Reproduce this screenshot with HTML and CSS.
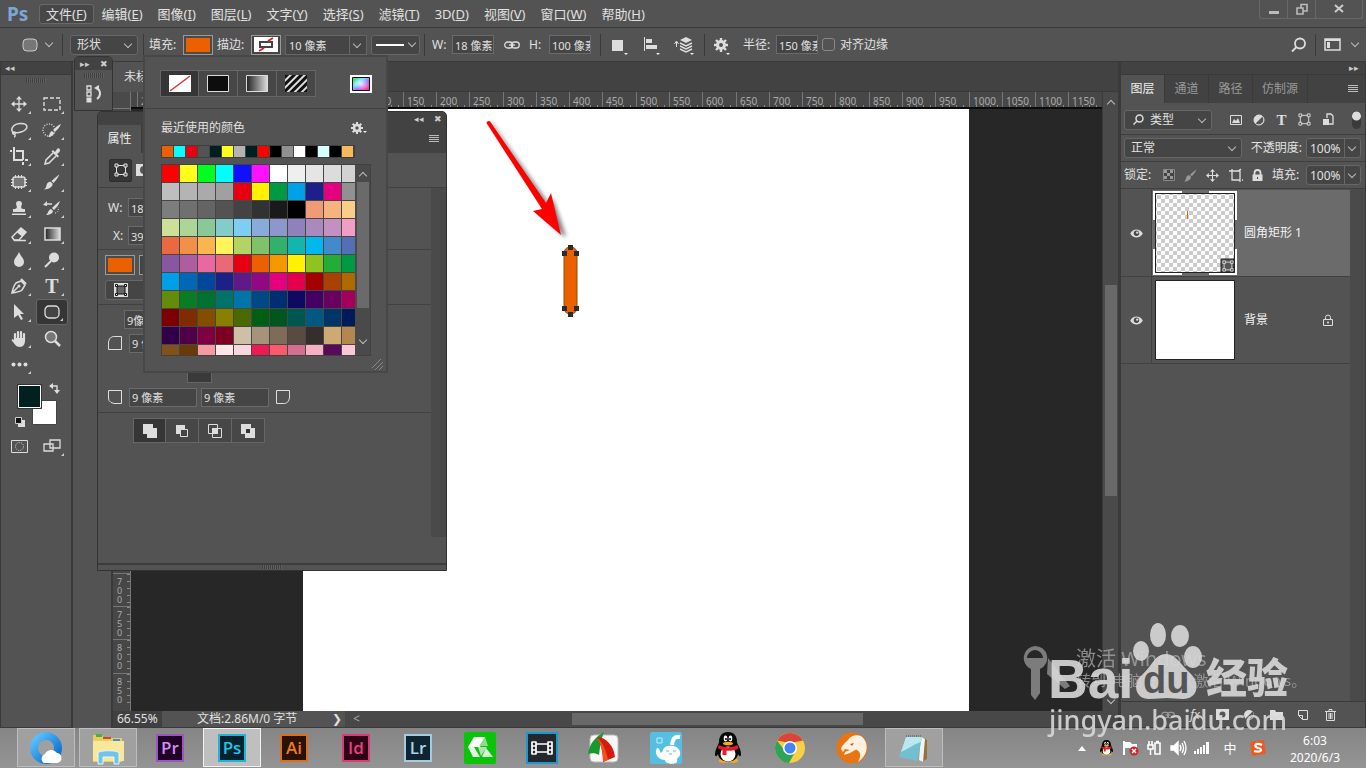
FILE: index.html
```html
<!DOCTYPE html>
<html lang="zh-CN">
<head>
<meta charset="utf-8">
<title>Photoshop</title>
<link rel="stylesheet" href="styles.css">
</head>
<body>
<svg class="defs" aria-hidden="true">
  <defs>
    <linearGradient id="g-grey"><stop offset="0" stop-color="#222"/><stop offset="1" stop-color="#ddd"/></linearGradient>
    <linearGradient id="g-blue" x1="0" y1="0" x2="1" y2="1"><stop offset="0" stop-color="#5fc4ff"/><stop offset="1" stop-color="#0667c8"/></linearGradient>
    <linearGradient id="g-rain" x1="0" y1="0" x2="1" y2="1"><stop offset="0" stop-color="#19e83a"/><stop offset=".35" stop-color="#6fe6ff"/><stop offset=".6" stop-color="#a86bff"/><stop offset=".8" stop-color="#ff4fb0"/><stop offset="1" stop-color="#ff2020"/></linearGradient>
    <radialGradient id="g-fade"><stop offset="0" stop-color="#fff" stop-opacity=".8"/><stop offset="1" stop-color="#fff" stop-opacity="0"/></radialGradient>
    <pattern id="p-check" width="8" height="8" patternUnits="userSpaceOnUse"><rect width="8" height="8" fill="#fff"/><path d="M0 0h4v4H0zM4 4h4v4H4z" fill="#ccc"/></pattern>
    <pattern id="p-stripe" width="5" height="5" patternUnits="userSpaceOnUse" patternTransform="rotate(45)"><rect width="5" height="5" fill="#ddd"/><rect width="3" height="5" fill="#111"/></pattern>
  </defs>
  <symbol id="path-box" viewBox="0 0 14 14"><path d="M2.500 2.500h9v9h-9z" fill="none" stroke="currentColor"/><path d="M1 1h3v3H1zM10 1h3v3h-3zM1 10h3v3H1zM10 10h3v3h-3z" fill="#535353" stroke="currentColor"/></symbol>
  <symbol id="gear" viewBox="0 0 14 14"><circle cx="7" cy="7" r="3.500" fill="none" stroke="currentColor" stroke-width="3"/><path d="M7 0v3M7 11v3M0 7h3M11 7h3M2 2l2 2M10 10l2 2M12 2l-2 2M4 10l-2 2" stroke="currentColor" stroke-width="2.400"/></symbol>
  <symbol id="move" viewBox="0 0 16 16"><path d="M8 2v12M2 8h12" stroke="currentColor" stroke-width="1.300"/><path d="M8 0l3 3.500H5zM8 16l3-3.500H5zM0 8l3.500-3v6zM16 8l-3.500-3v6z" fill="currentColor"/></symbol>
  <symbol id="brush" viewBox="0 0 16 16"><path d="M15.500.500c-1.500 3-4 6.500-6 8.500L7.500 7C10 4.500 13 2 15.500.500zM6.700 7.800l2 2C8.500 13 5 15.500 0 15.500c2.500-1.500 2-3 2.700-5C3.500 8.500 5 7.500 6.700 7.800z" fill="currentColor"/></symbol>
  <symbol id="eye" viewBox="0 0 14 10"><path d="M0 5c3-6 11-6 14 0-3 6-11 6-14 0z" fill="#ddd"/><circle cx="7" cy="4.800" r="3" fill="#4a4a4a"/><circle cx="7.800" cy="4" r="1.300" fill="#ddd"/></symbol>
  <symbol id="crop" viewBox="0 0 18 18"><path d="M4 0v13h9M0 4h2M6 4h7v9M13 15v3M15 13h3" fill="none" stroke="currentColor" stroke-width="2"/></symbol>
  <symbol id="link" viewBox="0 0 16 8"><rect x=".700" y="1" width="8" height="6" rx="3" fill="none" stroke="currentColor" stroke-width="1.300"/><rect x="7.300" y="1" width="8" height="6" rx="3" fill="none" stroke="currentColor" stroke-width="1.300"/><path d="M5 4h6" stroke="currentColor" stroke-width="1.300"/></symbol>
  <symbol id="qq" viewBox="0 0 28 32"><path d="M5 28c2-3 16-3 19 0 1 4-8 3-9.500 2C12 31 4 32 5 28z" fill="#f7a81b"/><path d="M14 0c6 0 9 4 9 10 0 2 4 7 4 12 0 3-1.500 3-3 0-1 10-19 10-20 0-1.500 3-3 3-3 0C1 17 5 12 5 10 5 4 8 0 14 0z" fill="#080808"/><ellipse cx="14" cy="22" rx="7.500" ry="7.500" fill="#fff"/><ellipse cx="11.500" cy="6.500" rx="1.800" ry="3" fill="#fff"/><ellipse cx="16.500" cy="6.500" rx="1.800" ry="3" fill="#fff"/><circle cx="12" cy="7" r="1"/><circle cx="16" cy="7" r="1"/><ellipse cx="14" cy="11.500" rx="5" ry="1.800" fill="#f7a81b"/><path d="M4.500 13c6 3 13 3 19 0l1 3.500c-4 2-8 2.500-12 2.200V23H8.500v-5L4 16.500z" fill="#e51c23"/></symbol>
</svg>

<div class="app">
  <header class="menubar">
    <span class="logo">Ps</span>
    <nav class="menus" aria-label="主菜单">
      <button class="menu menu-on">文件(<u>F</u>)</button><button class="menu">编辑(<u>E</u>)</button><button class="menu">图像(<u>I</u>)</button><button class="menu">图层(<u>L</u>)</button><button class="menu">文字(<u>Y</u>)</button><button class="menu">选择(<u>S</u>)</button><button class="menu">滤镜(<u>T</u>)</button><button class="menu">3D(<u>D</u>)</button><button class="menu">视图(<u>V</u>)</button><button class="menu">窗口(<u>W</u>)</button><button class="menu">帮助(<u>H</u>)</button>
    </nav>
    <div class="winbtns">
      <button aria-label="最小化"><svg width="12" height="12"><path d="M1 9.500h10" stroke="#bbb" stroke-width="3"/></svg></button>
      <button aria-label="还原"><svg width="12" height="12" fill="none" stroke="#bbb" stroke-width="1.600"><path d="M1 5h6v6H1zM5 5V1.500h6V8H7"/></svg></button>
      <button aria-label="关闭"><svg width="12" height="12"><path d="M2 2l8 7M10 2l-8 7" stroke="#ccc" stroke-width="2"/></svg></button>
    </div>
  </header>

  <div class="options">
    <div class="group g-shape"><button class="shape-btn" aria-label="圆角矩形工具"><svg width="16" height="14"><rect x="1" y="1" width="14" height="12" rx="4" fill="#777" stroke="#ccc"/></svg><i class="chev"></i></button></div>
    <div class="group g-mode"><span class="sel w-mode"><select aria-label="工具模式"><option>形状</option></select></span></div>
    <div class="group g-fill">
      <span class="lab">填充:</span><button class="swatch sw-orange" aria-label="填充颜色"></button>
      <span class="lab">描边:</span><button class="swatch" aria-label="描边颜色"><svg width="24" height="15"><path fill="#fff" d="M0 0h24v15H0z"/><path d="M6 5h12v5H6z" fill="#fff" stroke="#444" stroke-width="2"/><path d="M5 14l5-3M14 4l5-3" stroke="#d22" stroke-width="2"/></svg></button>
      <span class="sel w-stroke"><input aria-label="描边宽度" value="10 像素"></span>
      <button class="line-btn" aria-label="描边类型"><i class="stroke"></i><i class="chev"></i></button>
    </div>
    <div class="group g-size">
      <label for="ow">W:</label><input class="field" id="ow" value="18 像素">
      <button class="tool-btn" aria-label="链接宽高"><svg width="16" height="8"><use href="#link"/></svg></button>
      <label for="oh">H:</label><input class="field" id="oh" value="100 像素">
    </div>
    <div class="group g-ops">
      <button class="tool-btn" aria-label="路径操作"><svg width="20" height="20"><path d="M4 5h11v11H4z" fill="#ddd"/><path d="M16 18h4l-2 2z" fill="#eee"/></svg></button>
      <button class="tool-btn" aria-label="路径对齐"><svg width="20" height="20"><path d="M3.500 2v14" stroke="#ddd"/><path d="M5 4h6v4H5zM5 10h11v4H5z" fill="#ddd"/><path d="M15 18h4l-2 2z" fill="#eee"/></svg></button>
      <button class="tool-btn" aria-label="路径排列"><svg width="20" height="20"><path d="M2.500 12V7M.500 9l2-3 2 3" stroke="#ddd" fill="none"/><path d="M12 2l6 3-6 3-6-3z" fill="#ddd"/><path d="M6 8l6 3 6-3M6 11l6 3 6-3M6 14l6 3 6-3" fill="none" stroke="#ddd" stroke-width="1.400"/><path d="M16 18h4l-2 2z" fill="#eee"/></svg></button>
    </div>
    <div class="group g-radius">
      <button class="tool-btn" aria-label="设置"><svg width="16" height="20"><use href="#gear" y="3" width="14" height="14"/><path d="M12 18h4l-2 2z" fill="#eee"/></svg></button>
      <label for="orad">半径:</label><input class="field" id="orad" value="150 像素">
      <input type="checkbox" id="align"><label for="align">对齐边缘</label>
    </div>
    <div class="right-tools">
      <button class="search" aria-label="搜索"><svg width="16" height="16" fill="none" stroke="#ddd" stroke-width="1.800"><circle cx="9" cy="6.500" r="5"/><path d="M5.500 10L1 14.500"/></svg></button>
      <button class="wspace" aria-label="工作区"><svg width="17" height="13"><path d="M1 1h15v11H1z" fill="none" stroke="#ddd" stroke-width="1.500"/><path d="M1 2h15" stroke="#ddd" stroke-width="2"/><path d="M3 4h3v6H3z" fill="#ddd"/></svg><i class="chev"></i></button>
    </div>
  </div>

  <main class="work">
    <aside class="tools" aria-label="工具">
      <div class="bar-head">◂◂</div>
      <div class="grip"></div>
      <div class="tool-grid" id="tools">
        <button aria-label="移动"><svg width="16" height="16"><use href="#move"/></svg></button>
        <button aria-label="矩形选框"><svg width="18" height="14"><path d="M1 1h16v12H1z" fill="none" stroke="#ddd" stroke-width="1.400" stroke-dasharray="4 2"/></svg></button>
        <button aria-label="套索"><svg width="18" height="16" fill="none" stroke="#ddd" stroke-width="1.500"><path d="M4 11C-1 8 3 2 10 1.500c9-.500 9 6 1 8.500-3 1-6 .500-7 0-1.500 0-2 2 0 2s2-2 0-2M4 12c2 1 1 3 0 3"/></svg></button>
        <button aria-label="快速选择"><svg width="20" height="16"><circle cx="7" cy="8" r="6" fill="none" stroke="#ddd" stroke-dasharray="1 1.500" stroke-width="1.400"/><path d="M19 2c-1 3-4 6-6 8l-2-2c3-3 5-5 8-6zM10 9l2 2c0 2-3 4-6 4 2-1 1-5 4-6z" fill="#ddd"/></svg></button>
        <button aria-label="裁剪"><svg width="18" height="18"><use href="#crop"/></svg></button>
        <button aria-label="吸管"><svg width="17" height="17"><path d="M9 2l6 6-1.500 1.500L7.500 3.500zM11 4l2-3c2-2 4 1 2.500 3L13 6z" fill="#ddd"/><path d="M9 5l-7 7-1 4 4-1 7-7" fill="none" stroke="#ddd" stroke-width="1.500"/></svg></button>
        <button aria-label="修补"><svg width="18" height="16"><rect x="3" y="3" width="12" height="10" rx="2" fill="#777" stroke="#ddd" stroke-width="1.500"/><path d="M5.500 1v3M8.500 1v3M11.500 1v3M5.500 12v3M8.500 12v3M11.500 12v3M1 5.500h3M1 8.500h3M1 11.500h3M14 5.500h3M14 8.500h3M14 11.500h3" stroke="#ddd"/></svg></button>
        <button aria-label="画笔"><svg width="16" height="16"><use href="#brush"/></svg></button>
        <button aria-label="图章"><svg width="16" height="16" fill="#ddd"><path d="M2 9c5 0 4-2 3-5a3 3 0 1 1 6 0c-1 3-2 5 3 5v3H2zM1 13.500h14V15H1z"/></svg></button>
        <button aria-label="历史画笔"><svg width="18" height="16"><path d="M17 1c-1 4-4 7-6 9L9 8c3-3 5-5 8-7zM8 9l2 2c0 2-3 4-7 4 2-1 2-5 5-6z" fill="#ddd"/><path d="M3 4h6" stroke="#ddd" stroke-width="1.500"/><path d="M0 5l4-4v5z" fill="#ddd"/><path d="M12 13c3 0 4-3 3-6" fill="none" stroke="#ddd" stroke-dasharray="1 1.500"/></svg></button>
        <button aria-label="橡皮擦"><svg width="17" height="16"><path d="M10 2l5 4-7 8H3l-2-3z" fill="none" stroke="#ddd" stroke-width="1.500"/><path d="M10 2l5 4-4 4.500L6 6.500z" fill="#ddd"/><path d="M3 14.500h12" stroke="#ddd" stroke-width="1.500"/></svg></button>
        <button aria-label="渐变"><svg width="17" height="14"><path d="M1 1h15v12H1z" fill="url(#g-grey)" stroke="#ddd" stroke-width="1.500"/></svg></button>
        <button aria-label="模糊"><svg width="12" height="16"><path d="M6 0c2 5 5 6 5 10a5 5 0 0 1-10 0C1 6 4 5 6 0z" fill="#ddd"/></svg></button>
        <button aria-label="减淡"><svg width="16" height="16"><circle cx="10" cy="5.500" r="5" fill="#ddd"/><path d="M7 9l-6 6" stroke="#ddd" stroke-width="2"/></svg></button>
        <button aria-label="钢笔"><svg width="16" height="16"><path d="M1 15c1-5 2-8 4-10l5-2 4 4-3 5c-2 2-5 2-10 3zM1 15l6-6" fill="none" stroke="#ddd" stroke-width="1.500"/><circle cx="8" cy="8" r="1.500" fill="#ddd"/><path d="M10 1l5 5" stroke="#ddd" stroke-width="2"/></svg></button>
        <button aria-label="文字" class="serif-t">T</button>
        <button aria-label="路径选择"><svg width="12" height="17"><path d="M1 0l10 10H7l3 5-2 1-3-5-4 3z" fill="#ddd"/></svg></button>
        <button aria-label="圆角矩形" class="on"><svg width="16" height="14"><rect x="1" y="1" width="14" height="12" rx="4" fill="#444" stroke="#ddd" stroke-width="1.300"/></svg></button>
        <button aria-label="抓手"><svg width="17" height="17"><path d="M4 10V4M7 9V2M10 9V2M13 10V4" stroke="#ddd" stroke-width="2.200" stroke-linecap="round"/><path d="M3 8h11v3c0 3-2 6-5 6-4 0-5-3-8-6-1-2 1-2 2-1z" fill="#ddd"/></svg></button>
        <button aria-label="缩放" class="plain"><svg width="17" height="17" fill="none" stroke="#ddd"><circle cx="7" cy="7" r="5.500" fill="#777" stroke-width="1.500"/><path d="M11 11l5 5" stroke-width="2.500"/></svg></button>
        <button aria-label="编辑工具栏"><svg width="17" height="5" fill="#ddd"><circle cx="2.500" cy="2.500" r="2"/><circle cx="8.500" cy="2.500" r="2"/><circle cx="14.500" cy="2.500" r="2"/></svg></button>
      </div>
      <button class="colors" aria-label="前景色和背景色"><svg width="44" height="46"><path d="M16.500 17.500h24v24h-24z" fill="#fff" stroke="#444"/><path d="M1.500 1.500h24v24h-24z" fill="#012020" stroke="#333"/><path d="M2.500 2.500h22v22h-22z" fill="none" stroke="#fff"/><path d="M5 37h4v7H2v-3" fill="#ddd"/><path d="M-.500 34.500h6v6h-6z" fill="#111" stroke="#ccc"/><path d="M36 3h5v6" fill="none" stroke="#ddd" stroke-width="1.400"/><path d="M37 0v6l-4-3zM38 7h6l-3 4z" fill="#ddd"/></svg></button>
      <div class="tool-grid">
        <button class="plain" aria-label="快速蒙版"><svg width="17" height="13"><path d="M.500.500h16v12H.500z" fill="none" stroke="#ddd"/><circle cx="8.500" cy="6.500" r="4" fill="none" stroke="#ddd" stroke-dasharray="1 1.200"/></svg></button>
        <button aria-label="屏幕模式"><svg width="18" height="14" fill="#535353" stroke="#ddd" stroke-width="1.300"><path d="M7 1h10v8H7zM1 5h9v7H1z"/></svg></button>
      </div>
    </aside>

    <div class="dock"></div>

    <section class="doc">
      <div class="tabs"><button class="tab">未标题-1</button></div>
      <div class="corner"></div>
      <div class="hruler" id="hruler"></div>
      <div class="vscroll"><i class="chev up"></i><i class="thumb"></i><i class="chev"></i></div>
      <div class="vruler" id="vruler"></div>
      <div class="view">
        <div class="canvas">
          <svg class="art" width="120" height="220">
            <path class="shade" d="M7 14L66 98l3-6 12 35-24-22 6-4z" fill="#000" stroke="#000" stroke-width="2" opacity=".5"/>
            <path d="M2.500 14c0-2 3-3 4-1L62 94l5-10 10 42-28-24 9-2z" fill="#f00"/>
            <rect x="80" y="138" width="13" height="67" rx="6" fill="#eb6100" stroke="#87500c"/>
            <path d="M84 136h5v5h-5zM78 142h5v5h-5zM90 142h5v5h-5zM78 197h5v5h-5zM90 197h5v5h-5zM84 203h5v5h-5z" fill="#2b2b2b"/>
          </svg>
        </div>
      </div>
      <div class="status">
        <input class="zoom" aria-label="缩放比例" value="66.55%">
        <div class="info"><span>文档:2.86M/0 字节</span><span>❯</span></div>
        <div class="hscroll"><span>&lt;</span><i></i></div>
      </div>
    </section>

    <aside class="layers">
      <div class="bar-head end">▸▸</div>
      <div class="ptabs"><button class="ptab active">图层</button><button class="ptab">通道</button><button class="ptab">路径</button><button class="ptab wide">仿制源</button><button class="burger" aria-label="面板菜单"></button></div>
      <div class="prow filter">
        <span class="sel w-kind"><svg class="mag" width="11" height="11" fill="none" stroke="#ddd" stroke-width="1.500"><circle cx="6.500" cy="4.500" r="3.500"/><path d="M4 7L.500 10.500"/></svg><select aria-label="过滤类型"><option>类型</option></select></span>
        <span class="ficons">
          <button aria-label="像素图层"><svg width="12" height="10"><path d="M.500.500h11v9H.500z" fill="none" stroke="#ddd"/><path d="M2 8l2-4 2 2 2-3 2 5z" fill="#ddd"/></svg></button>
          <button aria-label="调整图层"><svg width="12" height="12"><circle cx="6" cy="6" r="5" fill="#ddd"/><path d="M9.500 2.500A5 5 0 0 1 2.500 9.500z" fill="#555"/><circle cx="6" cy="6" r="5" fill="none" stroke="#ddd"/></svg></button>
          <button aria-label="文字图层" class="serif-t sm">T</button>
          <button aria-label="形状图层"><svg width="13" height="13"><use href="#path-box"/></svg></button>
          <button aria-label="智能对象"><svg width="12" height="13"><path d="M5 5V1h4l2 2v8H7" fill="none" stroke="#ddd" stroke-width="1.300"/><path d="M1 6h6v6H1z" fill="#ddd"/></svg></button>
        </span>
        <button class="toggle" aria-label="图层过滤开关"></button>
      </div>
      <div class="prow"><span class="sel w-blend"><select aria-label="混合模式"><option>正常</option></select></span><label for="opac">不透明度:</label><span class="sel w-pct"><input id="opac" value="100%"></span></div>
      <div class="prow"><span class="lab">锁定:</span>
        <span class="licons">
          <svg width="12" height="12"><path d="M.500.500h11v11H.500z" fill="#444" stroke="#888"/><path d="M1 1h3v3H1zM7 1h3v3H7zM4 4h3v3H4zM1 7h3v3H1zM7 7h3v3H7z" fill="#999"/></svg>
          <svg class="dim" width="13" height="13"><use href="#brush"/></svg>
          <svg width="13" height="13"><use href="#move"/></svg>
          <svg width="14" height="13" fill="none" stroke="#ddd" stroke-width="1.300"><path d="M3 0v11h8M0 2h7M3 2h8v11M13 11h1M9 2l3-2"/></svg>
          <svg width="11" height="13"><path d="M2.500 6V4a3 3 0 0 1 6 0v2" fill="none" stroke="#ddd" stroke-width="1.800"/><path d="M.500 5.500h10V12H.500z" fill="#ddd"/><path d="M5 8h1v2H5z" fill="#444"/></svg>
        </span>
        <label for="fillp">填充:</label><span class="sel w-pct"><input id="fillp" value="100%"></span></div>
      <div class="list">
        <div class="layer active">
          <button class="vis" aria-label="显示图层"><svg width="13" height="9"><use href="#eye"/></svg></button>
          <svg class="thumbnail" width="84" height="84"><path d="M29 1H1v28M56 1h27v28M1 58v25h28M56 83h27V58" fill="none" stroke="#fff" stroke-width="2"/><path d="M2.500 2.500h79v79h-79z" fill="url(#p-check)" stroke="#222"/><path d="M34.500 20v8" stroke="#eb6100"/><path d="M68 68h13v13H68z" fill="#555" stroke="#222"/><use href="#path-box" x="69" y="69" width="12" height="12" color="#ddd"/></svg>
          <span class="name">圆角矩形 1</span>
        </div>
        <div class="layer">
          <button class="vis" aria-label="显示图层"><svg width="13" height="9"><use href="#eye"/></svg></button>
          <svg class="thumbnail" width="84" height="84"><path d="M2.500 2.500h79v79h-79z" fill="#fff" stroke="#222"/></svg>
          <span class="name">背景</span>
          <svg class="lock" width="10" height="12"><path d="M.500 5.500h9v6h-9zM2.500 5V3.500a2.500 2.500 0 0 1 5 0V5" fill="none" stroke="#ddd"/><circle cx="5" cy="8.500" r="1" fill="#ddd"/></svg>
        </div>
      </div>
      <div class="pfoot">
        <button class="dim" aria-label="链接图层"><svg width="14" height="8"><use href="#link"/></svg></button>
        <button aria-label="图层样式" class="fx">fx</button>
        <button aria-label="添加蒙版"><svg width="13" height="11"><path d="M0 0h13v11H0z" fill="#ddd"/><circle cx="6.500" cy="5.500" r="3" fill="#555"/></svg></button>
        <button aria-label="调整层"><svg width="12" height="12"><circle cx="6" cy="6" r="5" fill="#ddd"/><path d="M9.500 2.500A5 5 0 0 1 2.500 9.500z" fill="#555"/></svg></button>
        <button aria-label="新建组"><svg width="13" height="11"><path d="M0 1h5l1 2h7v8H0z" fill="#ddd"/></svg></button>
        <button aria-label="新建图层"><svg width="10" height="10"><path d="M.500 5.500V.500h9v9h-5M.500 5.500h4v4z" fill="none" stroke="#ddd"/></svg></button>
        <button aria-label="删除图层"><svg width="11" height="12" fill="none" stroke="#ddd"><path d="M0 2.500h11M4 2V.500h3V2M1.500 3v8.500h8V3M4 4v6M5.500 4v6M7 4v6"/></svg></button>
      </div>
    </aside>
  </main>

  <footer class="taskbar">
    <div class="tasks">
      <button class="task open" aria-label="浏览器"><svg width="34" height="34"><circle cx="17" cy="17" r="12" fill="none" stroke="url(#g-blue)" stroke-width="8"/><path d="M15 32a5 5 0 0 1 1-9 7 7 0 0 1 12-1c5 0 7 9 0 10z" fill="#fff"/></svg></button>
      <button class="task open" aria-label="资源管理器"><svg width="34" height="34"><path d="M2 4h9l2 3h18v24H2z" fill="#e9cd62"/><path d="M5 3h6v3H5z" fill="#4ab23c"/><path d="M12 6h8v2h-8z" fill="#d8452b"/><path d="M22 8h7v2h-7z" fill="#3d91d8"/><path d="M2 10h31v20H2z" fill="#f7e89c"/><path d="M7 33V22c0-3 21-3 21 0v11h-5v-7H12v7z" fill="#70c4ea" stroke="#e3f6ff"/></svg></button>
      <button class="task"><span class="app-ic pr">Pr</span></button>
      <button class="task current"><span class="app-ic ps">Ps</span></button>
      <button class="task"><span class="app-ic ai">Ai</span></button>
      <button class="task"><span class="app-ic id">Id</span></button>
      <button class="task"><span class="app-ic lr">Lr</span></button>
      <button class="task" aria-label="绿色应用"><svg width="32" height="32"><rect width="32" height="32" rx="2" fill="#0ac40a"/><path d="M10 5h11l-5 10H4z" fill="#fff"/><path d="M4 15h6l6 10H9z" fill="#e6f5e6"/><path d="M21 5l3 9h-9z" fill="#8fdc8f"/><path d="M14 15h9l-6 9z" fill="#b5deb5"/><path d="M22 16l7 9H18z" fill="#d8f2d8"/></svg></button>
      <button class="task" aria-label="视频编辑"><svg width="32" height="32"><path d="M1 1h30v30H1z" fill="#24272b" stroke="#159ad6" stroke-width="2"/><path d="M6 9.500v13M10 9.500v13M22 9.500v13M26 9.500v13M6 10h4M6 14h4M6 18h4M6 22h4M22 10h4M22 14h4M22 18h4M22 22h4M10 12h12M10 20h12" stroke="#fff" stroke-width="1.700"/></svg></button>
      <button class="task" aria-label="截图工具"><svg width="32" height="32"><rect x="2" y="3" width="28" height="27" rx="4" fill="#f7f7f7" stroke="#bbb"/><path d="M0 22C2 10 8 5 16 0c-3 7-4 15-5 23-3-2-7-2-11-1z" fill="#179a2d"/><path d="M9 5c9 0 17 9 18 20l-12 5c0-10-2-18-6-25z" fill="#d61a10"/><path d="M9 5c5 5 9 12 11 23l-5 2c0-10-2-18-6-25z" fill="#f4511e"/></svg></button>
      <button class="task" aria-label="蓝色助手"><svg width="32" height="32"><rect width="32" height="32" rx="2" fill="#55bfe2"/><path d="M7 6h5v5H7z" fill="none" stroke="#c8edf8"/><path d="M13 18c1-6 16-6 17 2 1 5-3 5-3 8 2 5-12 5-12 0-5 0-10-4-9-9 0-4 3-4 4 0 0 3 2 2 3-1z" fill="#fff"/><path d="M22 13c1-7 3-9 8-8" fill="none" stroke="#fff" stroke-width="4"/><path d="M16 19h3M23 19h3M19 22h3" stroke="#55bfe2"/></svg></button>
      <button class="task" aria-label="QQ"><svg width="28" height="32"><use href="#qq"/></svg></button>
      <button class="task" aria-label="Chrome"><svg width="32" height="32"><circle cx="16" cy="16" r="15" fill="#f8cf45"/><path d="M3 8.500a15 15 0 0 1 26 0L16 11z" fill="#db4437"/><path d="M3 8.500A15 15 0 0 0 15 31l6-11-10-1z" fill="#2fa35a"/><circle cx="16" cy="16" r="7" fill="#fff"/><circle cx="16" cy="16" r="5.500" fill="#4285f4"/></svg></button>
      <button class="task" aria-label="猎豹浏览器"><svg width="32" height="32"><circle cx="16" cy="16" r="15.500" fill="#e87512"/><path d="M5 17c1-4 4-6 7-9 3-5 12-7 16-1 5 7 3 17-6 23 3-5 3-10-1-12-2-1-4 2-7 3-2 1-4 1-6 2l1-3 5-2-5-1-2 3z" fill="#fff0e0"/><path d="M14 12l4-1-2 3z" fill="#c95d05"/></svg></button>
      <button class="task open" aria-label="记事本"><svg width="34" height="32"><path d="M27 6l3 2v19l-6 3z" fill="#9b7038"/><path d="M24 5l4 2-2 23-4-2z" fill="#eef5f5"/><path d="M9 5h16l-5 24L2 25z" fill="#72bfd0"/><path d="M9 5h16l-1 5C17 12 11 17 4 20z" fill="#b9e8f0"/><path d="M9 4h16" stroke="#6d7b7e" stroke-width="2" stroke-dasharray="1 1"/></svg></button>
    </div>
    <div class="tray">
      <span class="ti"><svg width="8" height="5"><path d="M0 5l4-5 4 5z" fill="#fff"/></svg></span>
      <span class="ti"><svg width="15" height="16"><use href="#qq"/></svg></span>
      <span class="ti"><svg width="17" height="16"><path d="M2 1v14" stroke="#fff" stroke-width="2"/><path d="M3 2h5l2 2h5v6H9L8 8H3z" fill="#fff"/><circle cx="12" cy="11" r="4.500" fill="#cf2330"/><path d="M10 9l4 4M14 9l-4 4" stroke="#fff" stroke-width="1.500"/></svg></span>
      <span class="ti"><svg width="16" height="16" fill="none" stroke="#fff" stroke-width="1.600"><path d="M9 3h5v11H9zM10 1.500h3M3 1v4M6 1v4M2 5h5v4H2zM4.500 9v6"/></svg></span>
      <span class="ti"><svg width="16" height="16" fill="none" stroke="#fff" stroke-width="1.400"><path d="M1 6h3l4-4v12l-4-4H1z" fill="#fff"/><path d="M10 5q2 3 0 6M12 3q3 5 0 10M14 1q4 7 0 14"/></svg></span>
      <span class="ti"><svg width="16" height="14" fill="#fff"><path d="M0 10h2v3H0zM3 8h2v5H3zM6 6h2v7H6zM9 4h2v9H9zM12 1h3v12h-3z"/></svg></span>
      <span class="ti ime">中</span>
      <span class="ti"><svg width="16" height="16"><rect x="1" y="1" width="14" height="14" rx="2" fill="#ee5a1e" transform="rotate(-8 8 8)"/><path d="M12 5C5 2 3 7 8 8s4 5-4 3" fill="none" stroke="#fff" stroke-width="2.200"/></svg></span>
      <div class="clock"><span>6:03</span><span>2020/6/3</span></div>
    </div>
  </footer>
</div>

<section class="props">
  <div class="fhead"><span>◂◂</span><span>✖</span></div>
  <div class="ptabs pt-props"><button class="ptab active">属性</button><button class="burger" aria-label="面板菜单"></button></div>
  <div class="pbody">
    <div class="pr-row pr-kind"><button class="mask-btn" aria-label="形状属性"><svg width="14" height="14"><use href="#path-box"/></svg></button><button class="mask2" aria-label="蒙版"><svg width="16" height="12"><path d="M0 0h16v12H0z" fill="#ddd"/><circle cx="8" cy="6" r="4" fill="#555"/></svg></button></div>
    <div class="pr-main">
      <div class="pr-cols">
        <div class="pr-row pr-w"><label for="pw">W:</label><input class="field" id="pw" value="18 像素"></div>
        <div class="pr-row pr-x"><label for="px">X:</label><input class="field" id="px" value="393 像素"></div>
        <div class="pr-row pr-fill"><button class="swatch sw-orange" aria-label="填充"></button><button class="swatch" aria-label="描边"></button></div>
        <div class="pr-row pr-align"><button class="align-btn" aria-label="描边对齐"><svg width="14" height="14"><path d="M0 0h14v14H0z" fill="#ddd"/><path d="M3 3h8v8H3z" fill="#666" stroke="#111"/><path d="M1.500 1.500h2v2h-2zM10.500 1.500h2v2h-2zM1.500 10.500h2v2h-2zM10.500 10.500h2v2h-2z" fill="#fff" stroke="#111"/></svg></button></div>
        <div class="pr-row pr-all"><input class="field" aria-label="全部圆角" value="9像素"></div>
        <div class="pr-row pr-corner"><svg width="14" height="14"><path d="M.500 13.500V6l1-3 2-2 2-.500h8v13z" fill="none" stroke="#ddd"/></svg><input class="field" aria-label="左上圆角" value="9 像素"></div>
        <div class="pr-row pr-link"><button aria-label="链接圆角"></button></div>
        <div class="pr-row pr-corner"><svg width="14" height="14"><path d="M.500.500h13v13H6l-3-1-2-2L.500 8z" fill="none" stroke="#ddd"/></svg><input class="field" aria-label="左下圆角" value="9 像素"><input class="field" aria-label="右下圆角" value="9 像素"><svg width="14" height="14"><path d="M.500.500h13V8l-1 3-2 2-2 .500h-8z" fill="none" stroke="#ddd"/></svg></div>
        <div class="pr-row pr-bool">
          <button class="on" aria-label="合并"><svg width="14" height="14"><path d="M0 0h10v4h4v10H4v-4H0z" fill="#ddd"/></svg></button><button aria-label="减去"><svg width="14" height="14"><path d="M1 1h9v9H1z" fill="#ddd"/><path d="M5.500 5.500h7v7h-7z" fill="#444" stroke="#ddd"/></svg></button><button aria-label="相交"><svg width="14" height="14"><path d="M.500.500h9v9h-9zM4.500 4.500h9v9h-9z" fill="none" stroke="#ddd"/><path d="M4 4h6v6H4z" fill="#ddd"/></svg></button><button aria-label="排除"><svg width="14" height="14"><path d="M0 0h10v4h4v10H4v-4H0z" fill="#ddd"/><path d="M5 5h4v4H5z" fill="#333"/></svg></button>
        </div>
      </div>
      <div class="pr-scroll"></div>
    </div>
  </div>
  <div class="pr-bottom"><i class="gripline"></i></div>
</section>

<section class="mini">
  <div class="fhead"><span>▸▸</span><span>✖</span></div>
  <div class="grip"></div>
  <button aria-label="历史记录"><svg width="16" height="18" fill="none" stroke="#ddd" stroke-width="1.300"><path d="M1 1h4v4H1zM1 7h4v4H1z"/><path d="M.500 12.500h5v5h-5z" fill="#ddd" stroke="none"/><path d="M11 3c4 3 4 8 0 11" stroke-width="2"/><path d="M8 3l5-3v6z" fill="#ddd" stroke="none"/></svg></button>
</section>

<section class="picker">
  <div class="pk-top">
    <div class="kinds">
      <button class="on" aria-label="无颜色"><svg width="22" height="17"><path d="M0 0h22v17H0z" fill="#fff"/><path d="M1 16L21 1" stroke="#d33" stroke-width="1.500"/></svg></button><button aria-label="纯色"><svg width="22" height="17"><path d="M.500.500h21v16H.500z" fill="#0d0d0d" stroke="#ddd"/></svg></button><button aria-label="渐变"><svg width="22" height="17"><path d="M.500.500h21v16H.500z" fill="url(#g-grey)" stroke="#ddd"/></svg></button><button aria-label="图案"><svg width="22" height="17"><path d="M0 0h22v17H0z" fill="url(#p-stripe)"/></svg></button>
    </div>
    <button class="spectrum" aria-label="拾色器"><svg width="22" height="18"><path d="M0 0h22v18H0z" fill="#fff"/><path d="M2.500 2.500h17v13h-17z" fill="url(#g-rain)" stroke="#111"/><path d="M3 3h16v12H3z" fill="url(#g-fade)"/></svg></button>
  </div>
  <div class="pk-body">
    <div class="pk-title"><span>最近使用的颜色</span><button aria-label="色板选项"><svg width="15" height="12"><use href="#gear" width="12" height="12"/><path d="M12 9h4l-2 2z" fill="#eee"/></svg></button></div>
    <div class="recent" id="recent"></div>
    <div class="pk-wrap"><div class="pk-grid" id="grid"></div><div class="pk-scroll"><i class="chev up"></i><i class="thumb"></i><i class="chev"></i></div></div>
    <svg class="resize" width="11" height="11"><path d="M0 9l9-9M3 11l8-8M7 11l4-4" stroke="#888"/></svg>
  </div>
</section>

<svg class="mark" width="290" height="120" aria-hidden="true">
  <g fill="#999" opacity=".75"><path d="M15 26a12 12 0 0 1 5 23v24l-5 7-4-5V49a12 12 0 0 1 4-23zm-8 12h16c0-4-4-8-8-8s-8 4-8 8z" fill-rule="evenodd"/><path d="M28 38l22 28-5 3-18-15z"/></g>
  <g fill="#aaa" opacity=".75"><text x="56" y="46" font-size="20">激活 Windows</text><text x="56" y="66" font-size="15">转到"电脑设置"以激活 Windows。</text></g>
  <g fill="#d8d8d8" opacity=".9">
    <text class="bold" x="28" y="78" font-size="55">Bai</text>
    <ellipse cx="138" cy="15" rx="8" ry="12"/><ellipse cx="160" cy="16" rx="9" ry="11"/><ellipse cx="121" cy="31" rx="8" ry="10"/><ellipse cx="173" cy="37" rx="9" ry="11"/>
    <path d="M146 34c10 0 14 10 24 19 11 10 8 26-7 26-6 0-11-1-16-1s-11 1-18 1c-14 0-17-16-7-24 10-9 13-21 24-21z"/>
    <text class="cjk" x="186" y="73" font-size="41">经验</text>
    <text x="29" y="110" font-size="27" class="url">jingyan.baidu.com</text>
  </g>
  <text class="bold" x="123" y="73" font-size="38" fill="#555">du</text>
</svg>
<script src="app.js"></script>
</body>
</html>
```
FILE: styles.css
```css
* { box-sizing: border-box; }
body { margin: 0; height: 100vh; overflow: hidden; background: #535353; color: #e0e0e0; font: 12px/16px "Noto Sans", "Noto Sans CJK SC", sans-serif; }
button, input, select { font: inherit; color: inherit; background: none; border: 0; margin: 0; padding: 0; border-radius: 0; }
button { display: flex; align-items: center; justify-content: center; }
select { appearance: none; }
svg { display: block; flex: none; overflow: visible; }
.defs { position: absolute; width: 0; height: 0; }
.app { display: flex; flex-direction: column; height: 100vh; }

/* menu bar */
.menubar { height: 28px; display: flex; align-items: center; border-bottom: 1px solid #3a3a3a; flex: none; }
.logo { width: 39px; padding-left: 7px; font: bold 19px/26px "Noto Sans", sans-serif; color: #7ba7d7; }
.menus { display: flex; gap: 1px; font-size: 13px; flex: 1; }
.menu { height: 20px; padding: 0 6px; border: 1px solid transparent; border-radius: 3px; white-space: nowrap; }
.menu-on { background: #474747; border-color: #686868; }
.winbtns { display: flex; align-self: flex-start; height: 19px; border: 1px solid #686868; border-top: 0; border-radius: 0 0 3px 3px; margin-right: 3px; }
.winbtns button { width: 28px; border-right: 1px solid #686868; }
.winbtns button:last-child { width: 46px; border: 0; }

/* options bar */
.options { height: 34px; display: flex; align-items: center; border-bottom: 1px solid #3a3a3a; flex: none; white-space: nowrap; }
.group { display: flex; align-items: center; height: 22px; border-right: 1px solid #3a3a3a; }
.g-shape { padding: 0 6px 0 20px; }
.shape-btn { width: 36px; justify-content: space-between; padding: 0 4px 0 2px; }
.g-mode { padding: 0 5px 0 7px; }
.g-fill { padding: 0 4px 0 5px; gap: 4px; }
.g-size { padding: 0 9px 0 7px; }
.g-size label { width: 20px; }
.g-ops { padding-right: 4px; }
.g-radius { border: 0; flex: 1; }
.g-radius label[for=orad] { width: 33px; margin-left: 5px; }
.lab { width: 30px; }
.chev { flex: none; width: 6px; height: 6px; margin-bottom: 3px; border: solid #bbb; border-width: 0 1px 1px 0; transform: rotate(45deg); }
.chev.up { margin: 4px 0 0; transform: rotate(225deg); }
.sel { position: relative; display: flex; align-items: center; height: 20px; border: 1px solid #666; border-radius: 3px; background: #454545; }
.sel select, .sel input { width: 100%; height: 18px; padding: 0 16px 0 6px; outline: 0; }
.sel::after { content: ""; position: absolute; right: 6px; top: 5px; width: 5px; height: 5px; border: solid #bbb; border-width: 0 1px 1px 0; transform: rotate(45deg); }
.w-mode { width: 68px; }
.w-stroke { width: 82px; font-size: 11px; border-radius: 0; }
.w-stroke input { padding: 0 0 0 3px; margin-right: 16px; border-right: 1px solid #666; }
.swatch { width: 30px; height: 20px; border: 1px solid #999; background: #444; }
.sw-orange { background: #eb6100; box-shadow: inset 0 0 0 2px #4b4b4b; }
.line-btn { width: 49px; height: 20px; border: 1px solid #666; border-radius: 3px; background: #454545; gap: 5px; }
.stroke { width: 28px; height: 2px; background: #fff; }
.field { width: 42px; height: 19px; font-size: 11px; padding: 0 0 0 2px; border: 1px solid #6a6a6a; background: #454545; }
.tool-btn { width: 33px; height: 22px; color: #ddd; }
.g-size .tool-btn { width: 35px; }
.options input[type=checkbox] { appearance: none; width: 13px; height: 13px; border: 1px solid #888; border-radius: 3px; margin: 0 5px 0 4px; }
.right-tools { display: flex; align-items: center; height: 22px; padding-right: 8px; }
.search { width: 34px; height: 22px; border-right: 1px solid #3a3a3a; }
.wspace { width: 42px; justify-content: space-between; padding: 0 0 0 8px; }

/* workspace */
.work { flex: 1; display: flex; min-height: 0; }
.tools { width: 73px; border: solid #3a3a3a; border-width: 0 2px 1px 1px; flex: none; }
.bar-head { height: 13px; padding: 0 4px; background: #424242; border-bottom: 1px solid #3a3a3a; font-size: 9px; line-height: 12px; color: #ccc; }
.end { text-align: right; }
.grip { height: 16px; display: flex; justify-content: center; padding-top: 3px; }
.grip::before, .gripline { content: ""; width: 20px; height: 5px; background: repeating-linear-gradient(90deg, #404040 0 1px, #606060 1px 2px); }
.tool-grid { display: grid; grid-template-columns: 33px 33px; grid-auto-rows: 26px; padding-left: 2px; }
.tool-grid button { position: relative; width: 32px; height: 26px; color: #ddd; }
.tool-grid button::after { content: ""; position: absolute; right: 4px; bottom: 3px; border: solid transparent; border-width: 0 0 3px 3px; border-bottom-color: #ccc; }
.tool-grid .plain::after { display: none; }
.tool-grid .on { background: #363636; border: 1px solid #666; border-radius: 3px; }
.serif-t { font: bold 20px/24px "Liberation Serif", serif; }
.serif-t.sm { font-size: 15px; }
.colors { padding: 6px 0 4px 15px; }
.dock { width: 40px; flex: none; border-right: 2px solid #3a3a3a; }

.doc { flex: 1; min-width: 0; display: grid; grid-template: 30px 17px 1fr 17px / 18px 1fr 16px; }
.tabs { grid-column: 1 / -1; background: #424242; border-bottom: 1px solid #3a3a3a; }
.tab { background: #535353; height: 30px; padding: 0 11px; width: 100px; justify-content: flex-start; }
.corner { background: #4a4a4a; border: solid #777; border-width: 0 1px 1px 0; }
.hruler { position: relative; overflow: hidden; background: #474747; border-bottom: 2px solid #0b0b0b; font-size: 10px; line-height: 18px; color: #aaa; }
.mark-h { position: absolute; top: 0; bottom: 0; width: 34px; padding-left: 3px; border-left: 1px solid #777; background: repeating-linear-gradient(90deg, transparent 0 6px, #888 6px 7px) bottom / 100% 2px no-repeat; }
.vscroll { grid-row: 2 / 4; grid-column: 3; background: #4a4a4a; border-left: 1px solid #3a3a3a; display: flex; flex-direction: column; align-items: center; justify-content: space-between; padding: 5px 0; }
.vscroll .thumb { width: 12px; height: 211px; margin-bottom: 23px; background: #696969; }
.vruler { position: relative; overflow: hidden; background: #474747; border-right: 1px solid #777; font-size: 9px; line-height: 9px; color: #aaa; }
.mark-v { position: absolute; left: 0; right: 0; height: 34px; padding: 3px 10px 0 4px; word-break: break-all; border-top: 1px solid #777; background: repeating-linear-gradient(#888 0 1px, transparent 1px 7px) right / 3px 100% no-repeat; }
.view { background: #272727; display: flex; padding: 0 133px 0 172px; }
.canvas { flex: 1; position: relative; background: #fff; }
.art { position: absolute; left: 181px; top: 0; }
.shade { filter: blur(2px); }
.status { grid-column: 1 / -1; display: flex; background: #4a4a4a; border-bottom: 1px solid #3a3a3a; }
.zoom { width: 49px; padding-left: 4px; background: #404040; }
.info { width: 183px; display: flex; justify-content: space-between; padding: 0 3px 0 35px; background: #535353; white-space: nowrap; }
.hscroll { flex: 1; display: flex; background: #484848; color: #aaa; padding: 2px 0; line-height: 12px; }
.hscroll span { flex: 0 0 227px; padding-left: 8px; }
.hscroll i { width: 291px; background: #696969; }

/* layers panel */
.layers { width: 248px; flex: none; display: flex; flex-direction: column; border: solid #3a3a3a; border-width: 0 1px 1px 3px; }
.layers .bar-head { flex: none; padding: 0 6px; }
.ptabs { display: flex; height: 28px; flex: none; background: #424242; color: #999; }
.ptab { width: 44px; border-right: 1px solid #3a3a3a; }
.ptab.wide { width: 55px; }
.ptab.active { background: #535353; color: #eee; }
.burger { width: 10px; height: 8px; margin: auto 7px auto auto; background: repeating-linear-gradient(#bbb 0 1px, transparent 1px 2px); }
.prow { height: 27px; flex: none; display: flex; align-items: center; gap: 4px; padding: 0 4px 0 3px; border-bottom: 1px solid #3f3f3f; white-space: nowrap; }
.prow.filter { height: 32px; padding-top: 2px; }
.w-kind { width: 88px; padding-left: 8px; flex: none; }
.ficons, .licons { display: flex; flex: 1; justify-content: space-around; align-items: center; padding: 0 8px; color: #ddd; }
.licons { padding: 0; }
.dim { opacity: .5; }
.toggle { width: 9px; height: 18px; border-radius: 5px; background: radial-gradient(circle at 50% 5px, #ddd 4px, #3a3a3a 5px); }
.w-blend { width: 118px; flex: none; }
.prow label { flex: 1; text-align: right; }
.licons + label { flex: 0 0 30px; text-align: left; }
.prow .lab { flex: none; }
.w-pct { width: 55px; flex: none; }
.w-pct input { padding: 0 0 0 3px; margin-right: 15px; border-right: 1px solid #666; }
.w-pct::after { right: 5px; }
.list { flex: 1; padding-top: 1px; border-right: 15px solid #4a4a4a; }
.layer { height: 87px; display: flex; align-items: center; border-bottom: 1px solid #414141; }
.layer.active { background: linear-gradient(90deg, #535353 31px, #6b6b6b 31px); }
.vis { width: 31px; height: 100%; border-right: 1px solid #414141; }
.thumbnail { margin-left: 1px; }
.name { flex: 1; padding-left: 7px; color: #f2f2f2; }
.lock { margin-right: 17px; }
.pfoot { height: 26px; flex: none; display: flex; align-items: center; gap: 13px; padding: 0 28px; justify-content: flex-end; border-top: 1px solid #3a3a3a; color: #ddd; }
.pfoot button { width: 14px; }
.fx { font-style: italic; }

/* taskbar */
.taskbar { height: 40px; flex: none; display: flex; justify-content: space-between; background: linear-gradient(#858585, #949494); }
.tasks { display: flex; gap: 4px; padding-left: 17px; }
.task { width: 58px; height: 39px; border: 1px solid transparent; }
.task.open { background: #a0a0a0; border-color: #bdbdbd; }
.task.current { background: #bfbfbf; border-color: #f2f2f2; }
.app-ic { width: 28px; height: 28px; border: 2px solid; font: 600 17px/23px "Open Sans", sans-serif; text-align: center; }
.pr { color: #d58cf5; border-color: #9a56c0; background: #210028; }
.ps { color: #25c5e8; border-color: #1fb5d8; background: #04222e; }
.ai { color: #ee7b20; border-color: #dd6f1c; background: #271203; }
.id { color: #ed3f80; border-color: #dc3b78; background: #2b0314; }
.lr { color: #add3e8; border-color: #a5cbe0; background: #0e2531; }
.tray { display: flex; align-items: center; color: #fff; }
.ti { width: 24px; display: flex; justify-content: center; }
.ti.ime { width: 32px; font-size: 13px; }
.clock { width: 96px; display: flex; flex-direction: column; align-items: center; padding: 1px 6px 0 0; line-height: 17px; }

/* floating panels */
.fhead { display: flex; justify-content: flex-end; gap: 10px; height: 13px; padding: 0 4px; background: #424242; border-radius: 4px 4px 0 0; font-size: 9px; line-height: 13px; color: #ccc; flex: none; }
.mini { position: absolute; left: 74px; top: 56px; width: 39px; height: 55px; background: #535353; border: 1px solid #333; border-radius: 5px 5px 0 0; }
.mini .grip { height: 13px; }
.mini > button { width: 100%; height: 22px; }
.props { position: absolute; left: 97px; top: 111px; width: 350px; height: 460px; display: flex; flex-direction: column; background: #535353; border: 1px solid #333; border-radius: 5px 5px 0 0; }
.pbody { flex: 1; display: flex; flex-direction: column; min-height: 0; }
.pr-row { display: flex; align-items: center; flex: none; }
.pr-kind { height: 35px; padding-left: 11px; gap: 4px; border-bottom: 1px solid #414141; }
.mask-btn { width: 23px; height: 23px; background: #363636; border: 1px solid #2d2d2d; border-radius: 2px; }
.pr-main { flex: 1; display: flex; }
.pr-cols { flex: 1; }
.pr-scroll { width: 15px; height: 349px; background: #4a4a4a; }
.pr-w { height: 39px; padding-left: 10px; }
.pr-x { height: 22px; padding-left: 15px; padding-bottom: 5px; }
.pr-w label { width: 20px; }
.pr-x label { width: 15px; }
.pr-fill { height: 30px; padding-left: 7px; gap: 4px; border-top: 1px solid #414141; }
.pr-align { height: 26px; padding: 0 0 4px 7px; border-bottom: 1px solid #414141; }
.align-btn { width: 80px; height: 20px; padding-left: 8px; justify-content: flex-start; border: 1px solid #666; border-radius: 3px; background: #454545; }
.pr-all { height: 29px; padding-left: 26px; }
.pr-corner { height: 18px; padding-left: 10px; gap: 7px; }
.pr-corner .field { width: 68px; }
.pr-corner .field + .field { margin-left: -3px; }
.pr-link { height: 36px; padding-left: 89px; align-items: flex-end; }
.pr-link button { width: 25px; height: 18px; margin-bottom: 5px; background: #3a3a3a; border: 1px solid #666; }
.pr-bool { height: 36px; margin-top: 6px; padding-left: 35px; border-top: 1px solid #414141; }
.pr-bool button, .kinds button { width: 33px; height: 25px; border: 1px solid #666; background: #474747; }
.pr-bool button + button, .kinds button + button { border-left: 0; }
.pr-bool .on, .kinds .on { background: #363636; }
.pr-bottom { height: 7px; border-top: 2px solid #3d3d3d; display: flex; justify-content: center; }
.gripline { height: 4px; }
.picker { position: absolute; left: 143px; top: 55px; width: 245px; height: 318px; background: #535353; border: 2px solid #474747; }
.pk-top { height: 52px; padding: 2px 14px 0 15px; display: flex; align-items: center; justify-content: space-between; border-bottom: 1px solid #414141; }
.kinds { display: flex; }
.kinds button { width: 39px; height: 27px; }
.pk-body { padding: 11px 3px 0 16px; }
.pk-title { display: flex; justify-content: space-between; padding-right: 17px; margin-bottom: 9px; }
.pk-title button { color: #ddd; }
.recent { display: flex; height: 13px; width: 194px; border: 1px solid #3f3f3f; }
.recent i { width: 12px; border-right: 1px solid #444; }
.pk-wrap { display: flex; height: 192px; width: 210px; margin-top: 6px; border: 1px solid #414141; }
.pk-grid { display: grid; grid-template-columns: repeat(11, 18px); grid-auto-rows: 18px; width: 193px; overflow: hidden; }
.pk-grid i { border: solid #474747; border-width: 0 1px 1px 0; }
.pk-scroll { flex: 1; display: flex; flex-direction: column; align-items: center; background: #4a4a4a; padding: 3px 0 9px; }
.pk-scroll .chev { margin-top: 5px; }
.pk-scroll .thumb { width: 12px; height: 126px; margin: 3px 0 auto; background: #6a6a6a; }
.resize { margin: 3px 0 0 auto; }

/* watermark */
.mark { position: absolute; right: 56px; bottom: 28px; pointer-events: none; }
.mark .bold { font-family: "Liberation Sans", sans-serif; font-weight: bold; }
.mark .cjk { font-family: "Noto Sans CJK SC", sans-serif; font-weight: 900; }
.mark .url { font-family: "Noto Sans", sans-serif; font-weight: 500; }
```
FILE: app.js
```js
const recent = "eb6100 00ffff e60012 535353 002020 ffff1a b4b4b4 002020 ff0000 000000 909090 ffffff 000000 d5ffff 000000 f6b95c";
const swatches = `ff0000 ffff1a 00ff21 00ffff 1010ff ff10ff ffffff efefef e5e5e5 dcdcdc d2d2d2
bebebe b4b4b4 aaaaaa a0a0a0 e60012 fff100 009944 00a0e9 1d2088 e4007f 919191
7d7d7d 707070 646464 535353 434343 323232 1a1a1a 000000 f19b76 f6b37f facd89
cce198 acd598 89c997 84ccc9 7ecef4 88abda 8c97cb 8f82bc aa89bd c490bf f19ec2
eb6941 f19149 f8b551 fff45c b3d465 80c269 32b16c 13b5b1 00b7ee 448aca 556fb5
8957a1 ae5da1 ea68a2 eb6877 e60012 eb6100 f39800 fff100 8fc31f 22ac38 009944
00a0e9 0068b7 00479d 1d2088 601986 920783 e4007f e5004f a40000 a84200 ac6a00
638c0b 097c25 007130 00736d 0075a9 004986 002e73 100964 440062 6a005f a4005b
7d0000 7f2d00 834e00 8a8000 486a00 005e15 00561f 005752 005982 003567 001c58
31004a 500047 7e0043 7d0022 cfbfa6 a5937c 7f6b5a 594a42 362e2b cfa972 b28850
81511c 6a3906 f59aa0 fde5e8 f9d5dd ef1a52 fb5a6a d56f92 f5b0c4 570a5a f8c8d6`;

function paint(id, list) {
  document.getElementById(id).innerHTML =
    list.split(/\s+/).map(c => `<i style="background:#${c}"></i>`).join("");
}
paint("recent", recent);
paint("grid", swatches);

/* 50 document pixels at 66.55% zoom */
const step = 50 * 0.6655;
function ruler(id, cls, side, zero, from, to) {
  let html = "";
  for (let n = from; n <= to; n++) {
    html += `<span class="${cls}" style="${side}:${Math.round(zero + n * step)}px">${Math.abs(n * 50)}</span>`;
  }
  document.getElementById(id).innerHTML = html;
}
ruler("hruler", "mark-h", "left", 172, -5, 23);
ruler("vruler", "mark-v", "top", -2, 0, 17);
```
